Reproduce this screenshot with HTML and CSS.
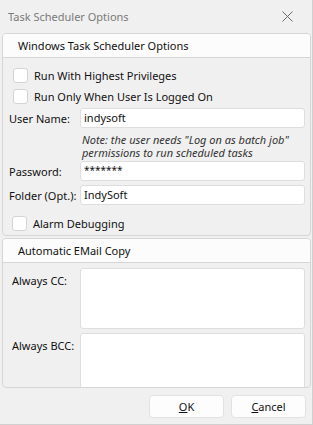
FILE: index.html
```html
<!DOCTYPE html>
<html lang="en">
<head>
    <meta charset="UTF-8">
    <title>Task Scheduler Options</title>
    <link rel="stylesheet" href="styles.css">
</head>
<body>
    <div class="window">
        <div class="titlebar">
            <span class="title">Task Scheduler Options</span>
            <svg class="close" width="11" height="11" viewBox="0 0 11 11">
                <path d="M0.5 0.5 L10.5 10.5 M10.5 0.5 L0.5 10.5" stroke="#6b6b6b" stroke-width="1" fill="none"/>
            </svg>
        </div>

        <!-- Windows Task Scheduler group -->
        <div class="group group-task">
            <div class="group-head">Windows Task Scheduler Options</div>
            <div class="group-body">
                <label class="check first"><span class="box"></span>Run With Highest Privileges</label>
                <label class="check"><span class="box"></span>Run Only When User Is Logged On</label>

                <div class="field user">
                    <span class="label">User Name:</span>
                    <div class="input">indysoft</div>
                </div>
                <div class="note">Note: the user needs "Log on as batch job"<br>permissions to run scheduled tasks</div>
                <div class="field pass">
                    <span class="label">Password:</span>
                    <div class="input stars">*******</div>
                </div>
                <div class="field folder">
                    <span class="label">Folder (Opt.):</span>
                    <div class="input">IndySoft</div>
                </div>

                <label class="check alarm"><span class="box"></span>Alarm Debugging</label>
            </div>
        </div>

        <!-- Email copy group -->
        <div class="group group-mail">
            <div class="group-head">Automatic EMail Copy</div>
            <div class="group-body mail-body">
                <div class="field area-row cc">
                    <span class="label">Always CC:</span>
                    <div class="area"></div>
                </div>
                <div class="field area-row bcc">
                    <span class="label">Always BCC:</span>
                    <div class="area tall"></div>
                </div>
            </div>
        </div>

        <div class="buttons">
            <button><u>O</u>K</button>
            <button><u>C</u>ancel</button>
        </div>
    </div>
</body>
</html>
```

FILE: styles.css
```css
body {
    margin: 0;
    background-color: #f0f0f0;
    font-family: "Noto Sans", "Open Sans", sans-serif;
    font-size: 11px;
    color: #111;
}
.window {
    width: 313px;
    height: 425px;
    box-sizing: border-box;
    border: 1px solid #d0d0d0;
    border-top: none;
    border-left: none;
    background-color: #f0f0f0;
    display: flex;
    flex-direction: column;
}
.titlebar {
    height: 33px;
    display: flex;
    align-items: center;
    justify-content: space-between;
    padding: 0 19px 0 8px;
}
.title {
    color: #7a7a7a;
}
.group {
    margin: 0 0 0 2px;
    width: 309px;
    box-sizing: border-box;
    border: 1px solid #d6d6d6;
    border-radius: 4px;
    overflow: hidden;
    white-space: nowrap;
}
.group-head {
    background-color: #fcfcfc;
    height: 23px;
    line-height: 23px;
    padding-left: 15px;
    border-bottom: 1px solid #d6d6d6;
}
.group-task {
    height: 203px;
}
.group-body {
    padding: 0 5px 0 6px;
}
.check {
    display: flex;
    align-items: center;
    height: 21px;
    gap: 6px;
    padding-left: 4px;
}
.check.first {
    margin-top: 7px;
}
.box {
    width: 15px;
    height: 15px;
    box-sizing: border-box;
    background-color: #fff;
    border: 1px solid #d4d4d4;
    border-radius: 3px;
}
.field {
    display: flex;
    align-items: center;
}
.label {
    width: 71px;
    flex-shrink: 0;
}
.input {
    flex: 1;
    height: 20px;
    box-sizing: border-box;
    background-color: #fff;
    border: 1px solid #dedede;
    border-radius: 3px;
    padding-left: 3px;
    line-height: 17px;
}
.stars {
    font-size: 10px;
}
.field.user {
    margin-top: 1px;
}
.note {
    margin-left: 73px;
    font-style: italic;
    color: #333;
    line-height: 13px;
    margin-top: 5px;
    height: 28px;
}
.field.folder {
    margin-top: 4px;
}
.check.alarm {
    margin-top: 8px;
    padding-left: 3px;
}
.group-mail {
    margin-top: 2px;
    height: 150px;
}
.mail-body {
    padding-top: 5px;
}
.area-row {
    align-items: flex-start;
}
.area-row .label {
    padding-left: 3px;
    width: 68px;
    margin-top: 5px;
}
.area {
    flex: 1;
    height: 61px;
    box-sizing: border-box;
    background-color: #fff;
    border: 1px solid #dedede;
    border-radius: 3px;
}
.bcc {
    margin-top: 4px;
}
.area.tall {
    height: 80px;
}
.buttons {
    display: flex;
    justify-content: flex-end;
    gap: 7px;
    padding: 7px 6px 0 0;
}
button {
    width: 75px;
    height: 23px;
    background-color: #fdfdfd;
    border: 1px solid #e2e2e2;
    border-radius: 4px;
    font-family: "Noto Sans", "Open Sans", sans-serif;
    font-size: 11px;
    color: #111;
    padding: 0;
}
```
